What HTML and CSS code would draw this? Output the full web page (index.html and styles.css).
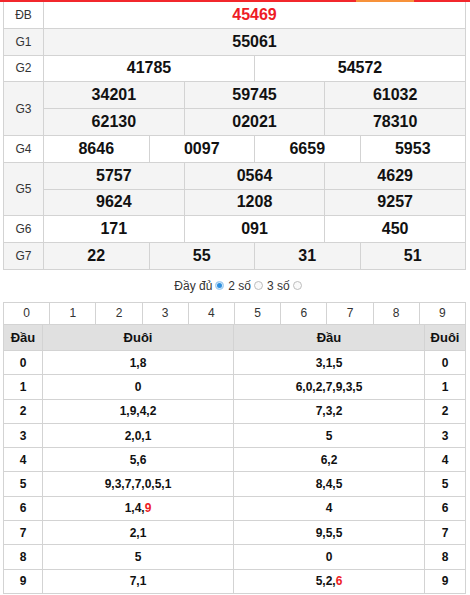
FILE: index.html
```html
<!DOCTYPE html>
<html lang="vi">
<head>
<meta charset="utf-8">
<link rel="stylesheet" href="styles.css">
</head>
<body>
<div class="topbar"><span class="seg red1"></span><span class="seg orange"></span><span class="seg red2"></span></div>
<div class="kq">
  <div class="row">
    <div class="lbl">ĐB</div>
    <div class="vals"><div class="sub c1"><div class="v db">45469</div></div></div>
  </div>
  <div class="row alt">
    <div class="lbl">G1</div>
    <div class="vals"><div class="sub c1"><div class="v">55061</div></div></div>
  </div>
  <div class="row">
    <div class="lbl">G2</div>
    <div class="vals"><div class="sub c2"><div class="v">41785</div><div class="v">54572</div></div></div>
  </div>
  <div class="row alt">
    <div class="lbl">G3</div>
    <div class="vals">
      <div class="sub c3"><div class="v">34201</div><div class="v">59745</div><div class="v">61032</div></div>
      <div class="sub c3"><div class="v">62130</div><div class="v">02021</div><div class="v">78310</div></div>
    </div>
  </div>
  <div class="row">
    <div class="lbl">G4</div>
    <div class="vals"><div class="sub c4"><div class="v">8646</div><div class="v">0097</div><div class="v">6659</div><div class="v">5953</div></div></div>
  </div>
  <div class="row alt">
    <div class="lbl">G5</div>
    <div class="vals">
      <div class="sub c3"><div class="v">5757</div><div class="v">0564</div><div class="v">4629</div></div>
      <div class="sub c3"><div class="v">9624</div><div class="v">1208</div><div class="v">9257</div></div>
    </div>
  </div>
  <div class="row">
    <div class="lbl">G6</div>
    <div class="vals"><div class="sub c3"><div class="v">171</div><div class="v">091</div><div class="v">450</div></div></div>
  </div>
  <div class="row alt">
    <div class="lbl">G7</div>
    <div class="vals"><div class="sub c4"><div class="v">22</div><div class="v">55</div><div class="v">31</div><div class="v">51</div></div></div>
  </div>
</div>

<div class="opts">
  <span>Đầy đủ</span><span class="radio on"></span>
  <span>2 số</span><span class="radio"></span>
  <span>3 số</span><span class="radio"></span>
</div>

<div class="lt">
  <div class="nums">
    <div>0</div><div>1</div><div>2</div><div>3</div><div>4</div><div>5</div><div>6</div><div>7</div><div>8</div><div>9</div>
  </div>
  <div class="lrow head"><div>Đầu</div><div>Đuôi</div><div>Đầu</div><div>Đuôi</div></div>
  <div class="lrow"><div>0</div><div>1,8</div><div>3,1,5</div><div>0</div></div>
  <div class="lrow"><div>1</div><div>0</div><div>6,0,2,7,9,3,5</div><div>1</div></div>
  <div class="lrow"><div>2</div><div>1,9,4,2</div><div>7,3,2</div><div>2</div></div>
  <div class="lrow"><div>3</div><div>2,0,1</div><div>5</div><div>3</div></div>
  <div class="lrow"><div>4</div><div>5,6</div><div>6,2</div><div>4</div></div>
  <div class="lrow"><div>5</div><div>9,3,7,7,0,5,1</div><div>8,4,5</div><div>5</div></div>
  <div class="lrow"><div>6</div><div>1,4,<span class="hl">9</span></div><div>4</div><div>6</div></div>
  <div class="lrow"><div>7</div><div>2,1</div><div>9,5,5</div><div>7</div></div>
  <div class="lrow"><div>8</div><div>5</div><div>0</div><div>8</div></div>
  <div class="lrow"><div>9</div><div>7,1</div><div>5,2,<span class="hl">6</span></div><div>9</div></div>
</div>
</body>
</html>
```

FILE: styles.css
```css
* { box-sizing: border-box; }
html, body { margin: 0; padding: 0; background: #fff; }
body { font-family: "Liberation Sans", Arial, sans-serif; color: #111; width: 470px; }

.topbar { display: flex; height: 2px; }
.seg { display: block; height: 2px; }
.red1 { width: 356px; background: #f2272c; }
.orange { width: 58px; background: #f7923a; }
.red2 { flex: 1; background: #f2272c; }

.kq { margin-left: 3px; width: 463px; border-left: 1px solid #d3d3d3; }
.row { display: flex; background: #fff; }
.row.alt { background: #f4f4f4; }
.lbl {
  width: 40px; flex: none; display: flex; align-items: center; justify-content: center;
  font-size: 12px; color: #333; border-right: 1px solid #d3d3d3; border-bottom: 1px solid #d3d3d3;
}
.vals { flex: 1; display: flex; flex-direction: column; }
.sub { display: grid; height: 26.8px; }
.c1 { grid-template-columns: 1fr; }
.c2 { grid-template-columns: 1fr 1fr; }
.c3 { grid-template-columns: 1fr 1fr 1fr; }
.c4 { grid-template-columns: 1fr 1fr 1fr 1fr; }
.v {
  display: flex; align-items: center; justify-content: center;
  font-size: 16px; font-weight: bold; color: #111;
  border-right: 1px solid #d3d3d3; border-bottom: 1px solid #d3d3d3;
}
.v.db { color: #ee1c25; }

.opts {
  height: 32px; display: flex; align-items: center; justify-content: center; gap: 2px;
  font-size: 12px; color: #333; padding-left: 8px;
}
.radio {
  width: 9px; height: 9px; border-radius: 50%; border: 1px solid #bdbdbd; background: #fafafa;
  display: inline-block; margin: 0 2px 0 1px; position: relative; top: 0;
}
.radio.on { border-color: #b8d8f2; background: #2d8fe0; box-shadow: inset 0 0 0 1px #d6eaf9; }

.lt { margin-left: 3px; width: 463px; border-left: 1px solid #d3d3d3; border-top: 1px solid #d3d3d3; }
.nums { display: grid; grid-template-columns: repeat(10, 1fr); height: 22px; }
.nums div {
  display: flex; align-items: center; justify-content: center; font-size: 12px; color: #333;
  border-right: 1px solid #d3d3d3; border-bottom: 1px solid #d3d3d3;
}
.lrow { display: grid; grid-template-columns: 39px 1fr 1fr 41px; height: 24.3px; }
.lrow.head { height: 26px; background: #e0e0e0; }
.lrow div {
  display: flex; align-items: center; justify-content: center; font-size: 12px; font-weight: bold; color: #111;
  border-right: 1px solid #d3d3d3; border-bottom: 1px solid #d3d3d3;
}
.lrow.head div { font-size: 13px; }
.hl { color: #ee1c25; }
```
